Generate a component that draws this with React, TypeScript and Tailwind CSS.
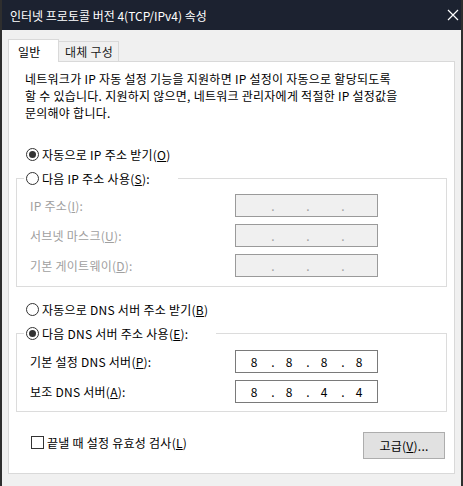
import React from "react";

function Radio({ checked }: { checked?: boolean }) {
  return (
    <span className="w-[13px] h-[13px] rounded-full border border-[#333333] bg-white flex items-center justify-center shrink-0">
      {checked && <span className="w-[7px] h-[7px] rounded-full bg-[#333333]" />}
    </span>
  );
}

function IpBox({ values, disabled }: { values: string[]; disabled?: boolean }) {
  return (
    <div
      className={
        "w-[143px] h-[23px] border flex items-center pl-[6px] text-[12px] tracking-normal " +
        (disabled ? "bg-[#f0f0f0] border-[#9a9a9a] text-[#a0a0a0]" : "bg-white border-[#7a7a7a] text-black")
      }
    >
      {values.map((v, i) => (
        <React.Fragment key={i}>
          <span className="w-[24px] text-center">{v}</span>
          {i < 3 && <span className="w-[11px] text-center pl-[3px]">.</span>}
        </React.Fragment>
      ))}
    </div>
  );
}

function Row({ label, children, disabled }: { label: React.ReactNode; children: React.ReactNode; disabled?: boolean }) {
  return (
    <div className="grid grid-cols-[205px_143px] items-center h-[23px]">
      <span className={disabled ? "text-[#a0a0a0]" : "text-black"}>{label}</span>
      {children}
    </div>
  );
}

export default function App() {
  return (
    <div className="w-[463px] h-[486px] bg-[#f0f0f0] border-x-2 border-[#2e2e2e] flex flex-col font-['Noto_Sans_CJK_KR','Malgun_Gothic',sans-serif] text-[12px] leading-[17px] text-black">
      <div className="h-[30px] shrink-0 bg-[#1c2230] flex items-center justify-between pl-[8px] pr-[2px] text-white text-[12px]">
        <span>인터넷 프로토콜 버전 4(TCP/IPv4) 속성</span>
        <svg width="12" height="12" viewBox="0 0 12 12">
          <path d="M1 1 L11 11 M11 1 L1 11" stroke="#ffffff" strokeWidth="1.2" />
        </svg>
      </div>

      <div className="flex flex-col px-[6px] pt-[9px] tracking-[0.25px]">
        <div className="flex items-end h-[22px]">
          <div className="relative z-10 w-[51px] h-[23px] -mb-px bg-white border border-b-0 border-[#d9d9d9] flex items-center pl-[9px]">
            일반
          </div>
          <div className="w-[60px] h-[20px] bg-[#f0f0f0] border border-l-0 border-b-0 border-[#d9d9d9] flex items-center pl-[6px] text-[#1a1a1a]">
            대체 구성
          </div>
        </div>

        <div className="h-[413px] bg-white border border-[#d9d9d9] flex flex-col px-[7px]">
          <p className="mt-[8px] ml-[9px] whitespace-nowrap">
            네트워크가 IP 자동 설정 기능을 지원하면 IP 설정이 자동으로 할당되도록
            <br />
            할 수 있습니다. 지원하지 않으면, 네트워크 관리자에게 적절한 IP 설정값을
            <br />
            문의해야 합니다.
          </p>

          <div className="mt-[23px] h-[20px] flex items-center gap-[3px] ml-[10px]">
            <Radio checked />
            <span>
              자동으로 IP 주소 받기(<u>O</u>)
            </span>
          </div>

          <fieldset className="mt-[4px] border border-[#dcdcdc] p-0 m-0">
            <legend className="ml-[7px] pl-[2px] pr-[28px] h-[20px] flex items-center gap-[3px] bg-white">
              <Radio />
              <span>
                다음 IP 주소 사용(<u>S</u>):
              </span>
            </legend>
            <div className="pl-[13px] pt-[6px] pb-[9px] flex flex-col gap-[7px]">
              <Row label={<>IP 주소(<u>I</u>):</>} disabled>
                <IpBox values={["", "", "", ""]} disabled />
              </Row>
              <Row label={<>서브넷 마스크(<u>U</u>):</>} disabled>
                <IpBox values={["", "", "", ""]} disabled />
              </Row>
              <Row label={<>기본 게이트웨이(<u>D</u>):</>} disabled>
                <IpBox values={["", "", "", ""]} disabled />
              </Row>
            </div>
          </fieldset>

          <div className="mt-[12px] h-[20px] flex items-center gap-[3px] ml-[10px]">
            <Radio />
            <span>
              자동으로 DNS 서버 주소 받기(<u>B</u>)
            </span>
          </div>

          <fieldset className="mt-[4px] border border-[#dcdcdc] p-0 m-0">
            <legend className="ml-[7px] pl-[2px] pr-[28px] h-[20px] flex items-center gap-[3px] bg-white">
              <Radio checked />
              <span>
                다음 DNS 서버 주소 사용(<u>E</u>):
              </span>
            </legend>
            <div className="pl-[13px] pt-[7px] pb-[8px] flex flex-col gap-[7px]">
              <Row label={<>기본 설정 DNS 서버(<u>P</u>):</>}>
                <IpBox values={["8", "8", "8", "8"]} />
              </Row>
              <Row label={<>보조 DNS 서버(<u>A</u>):</>}>
                <IpBox values={["8", "8", "4", "4"]} />
              </Row>
            </div>
          </fieldset>

          <div className="mt-[20px] flex items-start justify-between">
            <div className="flex items-center gap-[3px] ml-[15px] h-[20px]">
              <span className="w-[13px] h-[13px] border border-[#333333] bg-white shrink-0" />
              <span>
                끝낼 때 설정 유효성 검사(<u>L</u>)
              </span>
            </div>
            <button className="mr-[2px] w-[82px] h-[27px] bg-[#e1e1e1] border border-[#adadad] flex items-center justify-center text-black">
              고급(<u>V</u>)...
            </button>
          </div>
        </div>
      </div>
    </div>
  );
}
